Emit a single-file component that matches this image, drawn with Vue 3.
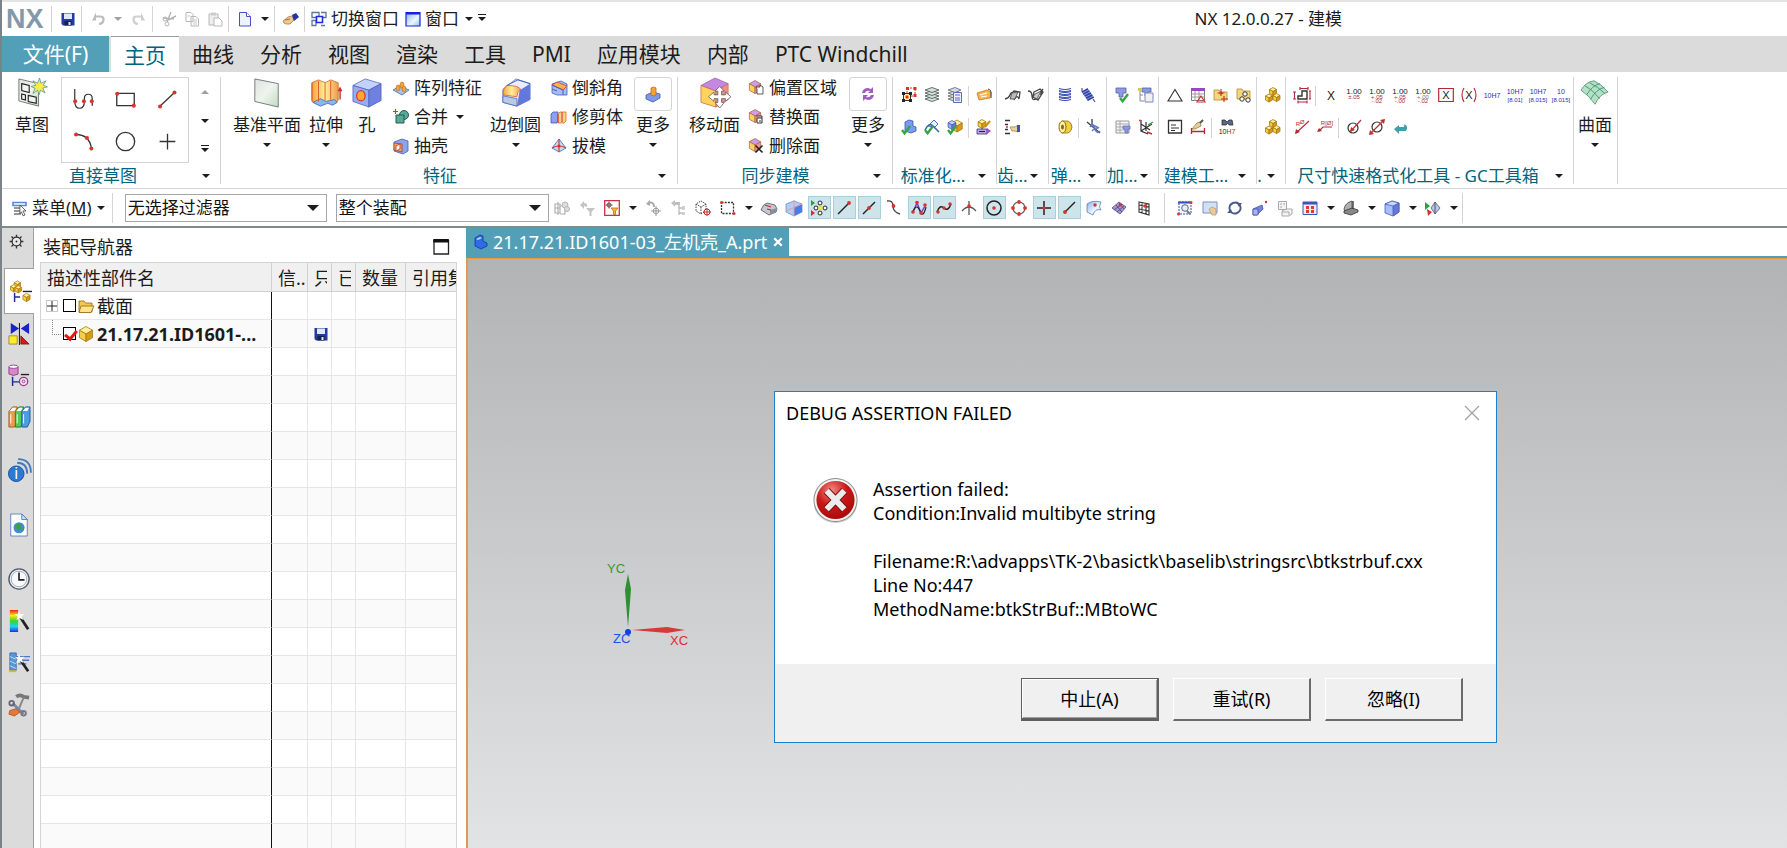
<script setup>
const dot = (x, y, r = 1.8) => `<circle cx="${x}" cy="${y}" r="${r}" fill="#d8342e"/>`
const line = (d, c = '#333', w = 1.3) => `<path d="${d}" fill="none" stroke="${c}" stroke-width="${w}"/>`
const fill = (d, c, s = 'none') => `<path d="${d}" fill="${c}" stroke="${s}" stroke-width=".8"/>`
const txt = (x, y, s, c, size = 7) => `<text x="${x}" y="${y}" font-size="${size}" fill="${c}" text-anchor="middle" font-family="Liberation Sans, sans-serif">${s}</text>`
const cube = (cx, cy, r, top, left, right, stroke) => {
  const w = r * 0.87, h = r / 2
  return `<g stroke="${stroke}" stroke-width=".8" stroke-linejoin="round">` +
    `<path fill="${top}" d="M${cx} ${cy - r}l${w} ${h}l${-w} ${h}l${-w} ${-h}z"/>` +
    `<path fill="${left}" d="M${cx - w} ${cy - h}l${w} ${h}v${r}l${-w} ${-h}z"/>` +
    `<path fill="${right}" d="M${cx + w} ${cy - h}l${-w} ${h}v${r}l${w} ${-h}z"/></g>`
}
const blue = (x, y, r) => cube(x, y, r, '#c3d2fa', '#96abf2', '#6478dc', '#4860b8')
const gold = (x, y, r) => cube(x, y, r, '#fff0a0', '#f6cf48', '#d69c18', '#a87a10')
const mix = (x, y, r) => cube(x, y, r, '#cf9cea', '#ffd35c', '#ef9588', '#b06a50')
const check = (x, y) => `<path d="M${x} ${y + 3}l2.6 3.2L${x + 8} ${y - 1}" fill="none" stroke="#35a545" stroke-width="2.4"/>`
const tol = (a, b, c = '#b22a36') => txt(8, 6.5, '1.00', '#222', 8) + txt(8, 11.5, a, c, 6) + (b ? txt(8, 16, b, '#b22a36', 6) : '')
const floppy = (a = '#233a9e') => fill('M1.500 2h13v12.500H3L1.500 13z', a) + fill('M4 2.500h8v5.500H4z', '#dfe8fb') + fill('M4.500 10h7v4.500h-7z', '#152052') + fill('M8.500 11h2v3h-2z', '#dfe8fb')
const undo = (c = '#bdbdbd') => line('M4 5.500h6q4 0 3.500 3.500T9 13', c, 2.2) + fill('M6 1.500v8H2z', c)
const cylinder = (x, y, w, h, c, s) => `<path d="M${x} ${y}v${h}q${w / 2} 3 ${w} 0v${-h}" fill="${c}" stroke="${s}"/><ellipse cx="${x + w / 2}" cy="${y}" rx="${w / 2}" ry="1.8" fill="#fff" stroke="${s}"/>`

const icons = {
  save: floppy(),
  undo: undo(),
  redo: `<g transform="matrix(-1 0 0 1 16 0)">${undo('#cfcfcf')}</g>`,
  cut: line('M10 1L6 11M2 7l11 1M15 5L7 9', '#b5b5b5', 1.4) + '<circle cx="4" cy="8" r="2" fill="none" stroke="#b5b5b5"/><circle cx="6" cy="13" r="2" fill="none" stroke="#b5b5b5"/>',
  copy: '<g fill="#fff" stroke="#b8b8b8"><path d="M2 1.500h5l2 2v7H2zM7 5.500h5l2.500 2.500v7H7z"/></g>' + line('M9 9h4M9 11h4M9 13h4M3.500 5h3', '#c8c8c8', 1),
  paste: '<path d="M2 3h9v11H2z" fill="#eee" stroke="#b8b8b8"/><path d="M4 1.500h5v3H4z" fill="#ccc"/><path d="M7 7h5l3 3v5H7z" fill="#fff" stroke="#b8b8b8"/>',
  newdoc: '<path d="M2.500 1.500h7l4 4v9.500h-11z" fill="#eef2ff" stroke="#4a4fc4"/><path d="M9.500 1.500v4h4" fill="#fff" stroke="#4a4fc4"/>',
  hand: fill('M0 10l5-4 4-1 2 4-4 4H3l-2-1z', '#efc88c', '#a67c48') + fill('M9 4l4-2 3 4-5 4z', '#2433a8') + line('M2 9l5-1', '#8b6434', 0.8),
  winswitch: '<g fill="none" stroke="#5d7795" stroke-width="1.300"><path d="M3 1.500h5v5H1v-5h2M10 1.500h5v5h-4M1 9.500h4v5H1zM10 14.500h4"/></g><path d="M5.500 5.500h6v6h-6z" fill="#fff" stroke="#1b2ddc" stroke-width="1.600"/>',
  window: '<path d="M1 1.500h14v13.500H1z" fill="url(#sky)" stroke="#1822dc" stroke-width="1.200"/><path d="M1 1h14v2.500H1z" fill="#1822dc"/>',

  sketch: fill('M2 1l21 5v24L2 24.500z', 'url(#mint)', '#555') + '<g fill="#f3f3f3" stroke="#222" stroke-width="1.200"><path d="M5 6l8 2v7.500l-8-2zM5 17l4 1v5.500l-4-1zM12 18.500l8.500 2V27L12 25z"/></g>' + fill('M24 0l1.600 5.500L31 3l-3 4.500 4.500 2-5 1.200L30 16l-5-3-1.500 5-1.500-5-5 3.500 2.300-5.500-4.300-2 5-1.200L17 3l5 2.500z', '#f7ec48', '#5290a5'),
  profile: line('M2 0v13q0 9 5.500 9t5.500-8v-3q0-5 4.500-5t4.500 5v8', '#333', 1.4) + dot(2.500, 14, 2.300) + dot(12.500, 14, 2.300) + dot(21.500, 14, 2.300),
  rect: line('M2 5h20v14H2z', '#333', 1.5) + dot(2.500, 5.500, 2.300) + dot(21.500, 19, 2.300),
  line: line('M3 20L20 4', '#333', 1.5) + dot(3.500, 20, 2.300) + dot(20, 4, 2.300),
  arc: line('M3 4q16 0 18 16', '#333', 1.5) + dot(3.500, 4, 2.300) + dot(16, 8, 2.300) + dot(21, 20, 2.300),
  circle: '<circle cx="12" cy="12" r="10.500" fill="none" stroke="#333" stroke-width="1.500"/>',
  plus: line('M12 3v18M3 12h18', '#333', 1.5),

  datum: fill('M3 1l25 5v25L3 25z', 'url(#mint)', '#555'),
  extrude: fill('M1 5l7-3 7 3 6-3 8 3v19l-5 4-6-3-9 4-8-4z', 'url(#amber)', '#b86a20') + fill('M2 26l8-4 6 3 9-2 3 3-5 3-5-2-8 3z', '#88b6ee', '#3a62b0') + line('M8 3v22M15 5v19M21 3v20M1 5v19', '#d95a2a', 1) + line('M31 23V11', '#cf2c2c', 1.5) + fill('M28.500 14L31 9l2.500 5z', '#cf2c2c'),
  hole: fill('M1 8L14 1l17 5-13 7z', '#c3d2fa', '#4860b8') + fill('M1 8l17 5v18L1 25z', '#96abf2', '#4860b8') + fill('M31 6L18 13v18l13-7z', '#7080e0', '#4860b8') + '<ellipse cx="9.500" cy="19" rx="4.500" ry="5.500" fill="#ffa830" stroke="#d8342e" stroke-width="1.300"/>',
  edge: fill('M2 12L16 1l15 5v17l-14 7-15-4z', '#e9eefc', '#4860b8') + fill('M20 13l11-7v17l-14 7z', '#6278dc') + fill('M2 18q0-7 4-10 13 0 15 4-4 3-4 8z', 'url(#amber)', '#d9503a') + fill('M2 19l15 3v8L2 26z', '#b9cbe4', '#4860b8') + line('M6 8l12-6M18 2l13 4', '#4860b8', 1),
  moveface: fill('M1 8L16 0l14 6-13 8z', '#c488e0', '#9060a8') + fill('M1 8l16 6v17L1 26z', '#ffd35c', '#c86a50') + fill('M30 6l-13 8v17l13-8z', '#ee9088', '#c86a50') + fill('M21 9l5 5h-3v4h4v-3l6 5-6 5v-3h-4v4h3l-5 6-5-6h3v-4h-4v3l-6-5 6-5v3h4v-4h-3z', '#fff', '#555'),
  surface: fill('M1 13Q6 4 15 3q7 3 15 12-9 2-14 13Q9 18 1 13z', '#b7dfc8', '#3d8c62') + line('M5 8q9 5 16 14M10 5q9 4 17 12M7 18Q13 8 21 6M11 23Q17 12 26 10', '#3d9c6c', 1),

  pattern: fill('M0 10l7-4 9 4-7 5z', '#a8c2ec', '#4468b0') + '<g fill="#f3a43c" stroke="#b8691a" stroke-width=".6"><ellipse cx="5" cy="8" rx="2" ry="3"/><ellipse cx="9" cy="5" rx="2" ry="3"/><ellipse cx="11" cy="9" rx="2" ry="3"/></g>',
  unite: '<circle cx="11" cy="6" r="4.500" fill="#56a996" stroke="#245c50"/><path d="M3 6h8v8H3z" fill="#56a996" stroke="#245c50"/>' + line('M2.500 0v5M0 2.500h5', '#d8342e', 1.2),
  shell: fill('M1 4l8-3 6 2v10l-5 3-9-3z', '#8aa4ee', '#4860b8') + fill('M1 5l8 1v8l-8-2z', '#f3a060', '#a84424') + fill('M3 8l4-2v5l-4 2z', '#fff4df', '#a84424'),
  chamfer: fill('M1 4l9-3 6 3v11H6L1 13z', '#a5bcf5', '#4860b8') + fill('M1 5l5-3 10 4-4 4z', '#f9b050', '#c9402c') + line('M1 5l11 5v5M1 9l5 2', '#4860b8', 1),
  trim: fill('M0 5l2-2h5v9l-1 2H0z', '#8aa0f0', '#3d58b8') + fill('M7 5l2-2h6v9l-2 2H7z', '#fad188', '#d9702a') + line('M7 5v9M11 3v10', '#cf2c2c', 1),
  draft: fill('M8 1l7 9-7 4-7-4z', '#c4d7f8', '#4a68a8') + line('M8 1v13M1 10q7-4 14 0', '#cf4030', 1.2) + dot(8, 8, 1.5),
  more: fill('M1 9l7-3 7 2v4l-7 4-7-3z', '#7f99e8', '#3d58a8') + fill('M6 2q2.500-2 5 0v7q-2 2-5 0z', '#f4a534', '#b86a1a'),
  refresh: fill('M2 7q1-5 6-5l3 1 2-2v6H8l2-2q-4-1-5 2z', '#a45cc2') + fill('M14 9q-1 5-6 5l-3-1-2 2V9h5l-2 2q4 1 5-2z', '#a45cc2'),
  offset: mix(7, 7, 6.500) + fill('M8 7h4v-2l3 2v7H9V9z', '#fff', '#333'),
  replace: mix(7, 7, 6.500) + '<path d="M8 7h6v2M9 9h5v5H9zM11 12h2" fill="#fff" stroke="#333"/>',
  remove: mix(7, 7, 6.500) + line('M7.500 7.500l7 7M14.500 7.500l-7 7', '#222', 1.6),

  g1: '<path d="M6 1h8v8H6z" fill="#fff" stroke="#d8342e" stroke-dasharray="2 1"/><path d="M2.500 6.500h7v7h-7z" fill="#fff8a0" stroke="#333"/>' + [[1, 5], [8, 5], [1, 12], [8, 12]].map(p => fill(`M${p[0]} ${p[1]}h3v3h-3z`, '#223')).join('') + fill('M4.500 8.500h3v3h-3z', '#e03020') + fill('M12.500 0h3v3h-3zM12.500 7h3v3h-3zM5 0h3v3H5z', '#d8342e'),
  g2: [11, 8, 5, 2].map(y => fill(`M1 ${y + 1}l7-2.500 7 2.500-7 2.500z`, '#d5e0dd', '#44524f')).join(''),
  g3: [11, 8, 5, 2].map(y => fill(`M1 ${y + 1}l7-2.500 6 2.500-6 2.500z`, '#d5dedd', '#5a6866')).join('') + '<path d="M6.500 5.500h8v10h-8z" fill="#eef" stroke="#5a68c8"/>' + line('M8 8h5M8 11h5M8 13h5', '#5a68c8', 1),
  g4: fill('M1 6l10-3 4 2-1 6-11 2z', '#f6b455', '#bf7a24') + line('M4 8l7-2M5 10l6-1', '#fff', 1.2) + line('M12 2q4 0 3 9', '#444', 1),
  g5: fill('M4 3l4-2 4 1v5l3 1v4l-5 2-6-2z', '#7c9cec', '#3656b0') + check(1, 8),
  g6: fill('M4 7l6-6 4 4-3 3z', '#e8efff', '#2a40d0') + line('M1 11Q5 3 9 7l6 6', '#3a6aa0', 1.6) + check(1, 8),
  g7: gold(10, 7, 6) + blue(5, 6, 4.500) + check(1, 8),
  g8: gold(6, 5, 4.500) + fill('M1 10h10v5H1z', '#b8a8e8', '#3c2a88') + fill('M11 9l4 3-4 3z', '#c040c0') + line('M9 8l5-6', '#c89018', 2) + line('M3 12.500h6', '#222', 1),
  gear1: line('M0 12q4-1 5-4t2-2M7 6l2-2 6 1-1 7q-1-3-3-2l-2 3', '#444', 1.3) + fill('M7 6l6-1-3 7H5z', '#bbb', '#444'),
  gear2: line('M0 4q4 0 4 5t4 3M15 2q-3 4-2 7M6 5l6-3 3 3-5 8-5-3z', '#444', 1.3) + fill('M7 7l6-3-4 8-4-2z', '#ccc', '#444'),
  gear3: line('M0 1.500h5M0 5.500h3M0 10.500h3M0 14.500h5', '#333', 1.4) + fill('M5 8h5l3-2v7l-3-1H7z', '#f2d1a0', '#a6804c') + fill('M12 6h3v7h-3z', '#4050c0') + dot(2, 8, 1),
  spring1: [2.500, 5.500, 8.500, 11.500].map(y => line(`M2 ${y - 1}q6 2 12 0M2 ${y + 1}q6 2 12 0`, '#3b4bb8', 1.2)).join(''),
  spring2: `<g transform="rotate(-35 8 8)">${fill('M4.500 2h7v11h-7z', '#8c98dc')}${[2, 4.500, 7, 9.500, 12].map(y => line(`M4.500 ${y}l7 1`, '#3040a0', 1.5)).join('')}</g>` + line('M2 1v3M13 12l2 3', '#556', 1.2),
  spring3: fill('M5 2h6q4 2 4 6t-4 6H5z', '#f2d03c', '#8a6a10') + '<ellipse cx="5.500" cy="8" rx="3.500" ry="6" fill="#fff0a0" stroke="#8a6a10"/><ellipse cx="5.500" cy="8" rx="1.500" ry="2.500" fill="#8a6a10"/>',
  spring4: line('M1 3l13 11M6 0v8', '#444', 1.4) + line('M4 8q2-3 4 0t4 0M6 12q2-3 4 0t4 0M5 5l8 4', '#6a7ac8', 1.4),
  proc1: fill('M1 1h10v5H8v4H4V6H1z', '#8c9ae0', '#5460b0') + check(5, 8),
  proc2: fill('M4 1h9v4h-3v4H7V5H4z', '#8c9ae0', '#5460b0') + '<path d="M7 6h8v9H7z" fill="#f2f2e8" stroke="#7a86c8"/>' + line('M2 3v11h4M2 8h3', '#8a8a8a', 1) + fill('M0 1h3v3H0z', '#d8c468'),
  proc3: '<path d="M1 2h13v12H1z" fill="#f4f4f4" stroke="#999"/>' + line('M1 5h13M1 8h13M1 11h13M5 2v12', '#aaa', 1) + fill('M8 7h7v3h-2v4h-3v-4H8z', '#8c9ae0', '#6070c8'),
  proc4: line('M3 1v11l7 3M3 12l11-7M3 5l9 6M8 3v9', '#333', 1.2) + line('M10 6l5-3', '#35a545', 1.4) + line('M9 13l5 2', '#c03030', 1.4) + dot(2, 1.5, 1),
  triangle: line('M8 2.500L15 14H1z', '#333', 1.1),
  tablegrid: '<path d="M1.500 1.500h13v12h-13z" fill="#fff" stroke="#777"/><path d="M1 1h14v3H1z" fill="#9548c0"/>' + line('M1 7h14M1 10h14M5 4v10M9 4v10', '#999', 1) + line('M11 9l4 6H7z', '#d8342e', 1.2),
  folderstar: fill('M1 3h5l1 2h7v8H1z', '#f3d77c', '#b08c30') + line('M8 2v7M4.500 6h7M11 9v6M8 12h7', '#c03020', 1.1) + dot(8, 6, 1.6),
  foldercirc: fill('M1 2h5l1 2h7v8H1z', '#f3d77c', '#b08c30') + '<g fill="#fff" stroke="#333"><circle cx="9" cy="7" r="2.200"/><circle cx="6" cy="12" r="2.200"/><circle cx="12" cy="13" r="2.200"/></g>',
  notebox: '<path d="M1.500 1.500h13v12.500h-13z" fill="#fff" stroke="#333" stroke-width="1.300"/>' + line('M4 6h5M4 9h8M4 11.500h4', '#333', 1.2),
  brush: fill('M7 4l3-1 1 4-6 3-3 0z', '#e9cf9c', '#96793c') + line('M10 4l3-3', '#555', 2) + line('M1.500 9v6M14.500 9v6M2 12.500h12', '#b22a36', 1.3),
  binoc: fill('M3 1h3l2 2 2-2h3l1 5h-4l-1-2-2 2H3z', '#556a88', '#333') + txt(8, 15, '10<tspan fill="#b22a36">H7</tspan>', '#222', 7),
  boxes: gold(8, 4.500, 4) + gold(4, 11, 4) + gold(11.500, 10.500, 4),
  dimshape: line('M8 4h5v8H4V9h4z', '#333', 1.4) + line('M6 0v3M14 0v3M6 1.500h8M-1 5h3M-1 12h3M.500 5v7M15 4h2M15 12h2M16 4v8M4 15h9M4 13.500v3M13 13.500v3', '#b22a36', 1.1),
  xmark: txt(8, 12.500, 'X', '#222', 12),
  t1: tol('±.05'), t2: tol('+.05', '-.02'), t3: tol('+.05', '-.00'), t4: tol('+.00', '-.02', '#777'),
  boxx: '<path d="M.700 1.500h14.600v13H.700z" fill="#fff" stroke="#b22a36" stroke-width="1.200"/>' + txt(8, 12, 'X', '#222', 11),
  parx: line('M3 1Q-1 8 3 15M13 1q4 7 0 14', '#b22a36', 1.1) + txt(8, 12, 'X', '#222', 11),
  h1: txt(8, 11, '10H7', '#2b2bb4', 7),
  h2: txt(8, 7, '10H7', '#2b2bb4', 7) + txt(8, 14.500, '[8.01]', '#2b2bb4', 6),
  h3: txt(8, 7, '10H7', '#2b2bb4', 7) + txt(8, 14.500, '[8.015]', '#2b2bb4', 6),
  h4: txt(8, 7, '10', '#2b2bb4', 7) + txt(8, 14.500, '[8.015]', '#2b2bb4', 6),
  rad1: line('M2 14L15 2', '#b22a36', 1.1) + fill('M1 15l1-5 4 3z', '#b22a36') + txt(4, 7, 'R', '#b22a36', 6) + txt(8, 5, 'Ø', '#b22a36', 6),
  rad2: line('M2 12l4-4h9', '#b22a36', 1.1) + fill('M0 13l2-4 3 3z', '#b22a36') + txt(10, 6, 'R[Ø]', '#b22a36', 6),
  dia1: '<circle cx="7" cy="9" r="5" fill="none" stroke="#333" stroke-width="1.200"/>' + line('M4 13L15 1', '#c03030', 1.2) + fill('M4 13l1-5 4 3z', '#c03030'),
  dia2: '<circle cx="8" cy="8" r="5" fill="none" stroke="#333" stroke-width="1.200"/>' + line('M1 15L15 1', '#c03030', 1.2) + fill('M0 16l1-5 4 4zM16 0l-1 5-4-4z', '#c03030'),
  back: fill('M2 10l5-4v2h4q2 0 1-3 5 2 2 7H7v3z', '#3f9faa'),

  menu: line('M1 2.500h13v3H1z', '#5a86d8', 1.6) + line('M2 8h6M2 11h6M2 14h7', '#777', 1.3) + fill('M8 5l6 6h-3l2 4-2 .800-1.600-4-1.600 2z', '#fff', '#444'),
  f1: line('M1 4h5v9H1zM1 8h5M4 2v13M6 6h5v8H6', '#b0b0b0', 1.2) + '<circle cx="11" cy="5" r="3" fill="#ddd" stroke="#b5b5b5"/><circle cx="13" cy="9" r="2.500" fill="#ddd" stroke="#b5b5b5"/>',
  f2: fill('M1 5l4-4v2q4 0 3 4L5 6v3z', '#c4c4c4') + fill('M7 8h9l-3.500 4v4h-2v-4z', '#c4c4c4'),
  f3: '<path d="M.700.700h14.600v14.600H.700z" fill="#fff" stroke="#cf3040" stroke-width="1.300"/><circle cx="5" cy="5" r="2" fill="none" stroke="#a33"/>' + line('M5 1.500v7M1.500 5h7', '#555', 1) + fill('M7 8h7l-2.500 3v3.500h-2V11z', '#f2b43c', '#b07818'),
  f4: line('M3 3q6-2 6 4', '#aaa', 2) + fill('M1 4l4-4v6z', '#aaa') + '<circle cx="11" cy="11" r="2.800" fill="none" stroke="#999"/>' + line('M11 6v10M6 11h10', '#999', 1),
  f5: fill('M1 3l4-3v2h5v3H5v2z', '#c0c0c0') + line('M9 5v10M9 8h5M9 13h5', '#bbb', 1.3) + fill('M12 6h3v4h-3zM12 12h3v3h-3z', '#d0d0d0'),
  f6: '<path d="M6 1l5 3v7l-5 3-5-3V4zM1 4l5 3 5-3M6 7v7" fill="none" stroke="#444" stroke-dasharray="1.500 1"/><circle cx="12" cy="12" r="3" fill="#fff" stroke="#c03030"/>' + line('M12 8v8M8 12h8', '#c03030', 1),
  f7: '<path d="M1.500 2.500h12v11h-12z" fill="none" stroke="#333" stroke-dasharray="2 1.200" stroke-width="1.300"/>' + dot(1.500, 2.500, 1.500) + dot(14, 13.500, 1.500),
  f8: fill('M0 10q2-6 6-7l8 2 2 4-1 3-7 3z', '#c4c8d4', '#555') + fill('M9 10l7-2-1 4-6 3z', '#888fa0') + line('M4 5l6 2M6 9l4 1', '#c03030', 1.2),
  f9: fill('M0 4l8-3 8 3v8l-8 4-8-4z', '#b4ccf4', '#6890d8') + fill('M8 7l8-3v8l-8 4z', '#4a7ce8') + line('M8 0v16M0 11L16 4', '#e89aa0', 1),
  s1: '<g fill="#fff" stroke="#222"><circle cx="9" cy="3" r="2"/><circle cx="9" cy="13" r="2"/><circle cx="5" cy="8" r="2"/><circle cx="14" cy="8" r="2"/></g><circle cx="9.500" cy="8" r="2.200" fill="#f2e23c"/>' + fill('M0 0l4 3-4 3z', '#2f9f2f') + fill('M0 10l4 3-4 3z', '#d83030'),
  s2: line('M2 14L13 3', '#222', 1.5) + dot(13, 3, 1.900),
  s3: line('M2 14L14 2', '#222', 1.5) + dot(8, 8, 1.900),
  s4: line('M1 1q6-1 6 5t7 8', '#444', 1.4) + dot(7.500, 6, 1.900),
  s5: line('M2 12L6 3l4 10 4-7', '#7a3cc8', 1.5) + line('M2 11q4-8 7 0t6-4', '#222', 1.2) + dot(2, 12, 1.800) + dot(6, 2.500, 1.800) + dot(10, 13, 1.800) + dot(14, 5, 1.800),
  s6: line('M1 12q3-8 7-4t7-4', '#222', 1.5) + dot(2, 12, 1.700) + dot(8, 8, 1.700) + dot(14, 4, 1.700),
  s7: line('M1 11q7-8 14 0M8 1v14', '#555', 1.3) + dot(8, 6, 1.800),
  s8: '<circle cx="8" cy="8" r="7" fill="none" stroke="#222" stroke-width="1.500"/>' + dot(8, 8, 1.800),
  s9: '<circle cx="8" cy="8" r="6" fill="none" stroke="#666" stroke-width="1.200"/>' + dot(8, 2, 1.900) + dot(2, 8, 1.900) + dot(14, 8, 1.900) + dot(8, 14, 1.900),
  s10: line('M8 1v14M1 8h14', '#222', 1.5) + dot(8, 8, 1.700),
  s11: line('M3 13L14 2', '#222', 1.4) + dot(4, 12, 1.900),
  s12: fill('M1 4Q6 0 15 2q-3 5 0 8-6-2-8 5L1 12z', 'url(#sky)', '#5c82b8') + dot(9, 5, 1.700),
  s13: fill('M1 8l7-6 7 5-6 7z', '#a898d0', '#554488') + line('M3 10l8-6M6 12l7-6M5 5l6 7M8 3l5 6', '#554488', 0.9) + dot(9, 5, 1.500),
  s14: line('M3 2l10 2v11L3 12zM3 5l10 2M3 9l10 2M6 2v11M10 3v11', '#333', 1.1) + dot(9, 6, 1.700),
  v1: '<path d="M2 2h12v12H2z" fill="#f2f6ff" stroke="#3050c0" stroke-dasharray="2 1"/>' + line('M1 2.500h12', '#3050c0', 2) + '<circle cx="8" cy="8" r="3.300" fill="#e4eef4" stroke="#667"/>' + line('M10 11l3 3', '#776', 2) + dot(1.500, 14, 1.500) + dot(14, 2.500, 1.500),
  v2: '<path d="M1 2h14v11H1z" fill="#d2e0f6" stroke="#7a90c0"/>' + fill('M7 9l3-2 4 2v6h-4z', '#edc898', '#c09a64'),
  v3: line('M3 11Q1 5 6 3t7 3M13 5q2 6-3 8t-7-3', '#4a5a88', 1.9) + fill('M12 7l3-4-5 0zM4 9l-4 4h5z', '#4a5a88'),
  v4: fill('M1 9l9-4 1 4-6 6H1z', '#7884e0', '#4450a8') + fill('M1 9h5v6H1z', '#aab4f4', '#4450a8') + dot(14, 2, 1.200),
  v5: '<g fill="#f3f3f3" stroke="#aaa"><path d="M1.500 1.500h8v8h-8zM5 11l4-2h6v5l-3 2H5z"/></g>' + line('M3 4h2M6 4h2M3 7h2M5 12h7v3', '#aaa', 1),
  v6: '<path d="M1 2h14v12.500H1z" fill="#e8eefc" stroke="#3c54b8"/><path d="M1 2h14v2.500H1z" fill="#3c54b8"/>' + fill('M4 6h3v3H4zM9 6h3v3H9zM4 10h3v3H4zM9 10h3v3H9z', '#e03a28'),
  v7: fill('M1 9q1-6 8-8v8l-4 3q-4 0-4-3z', '#b0b0b0', '#444') + fill('M1 11l8-3 6 2v2l-7 3-7-2z', '#888', '#333') + line('M10 1v8', '#333', 1.3),
  v8: fill('M1 4l7-3 7 2v9l-6 4-8-3z', '#a8bcf6', '#4860b8') + fill('M9 6l6-3v9l-6 4z', '#6478dc', '#4860b8') + fill('M1 4l7-3 7 2-6 3z', '#ccd8fa', '#4860b8'),
  v9: fill('M0 2l5 4-5 4z', '#2fa040') + fill('M2 9l5 3-4 4z', '#d83030') + fill('M10 2l5 6-5 6-4-6z', '#b8c8e8', '#556') + line('M10 2v12', '#556', 1),

  gear: '<circle cx="12" cy="12" r="7" fill="#e9e9e9" stroke="#333" stroke-width="2"/><circle cx="12" cy="12" r="1.600" fill="#333"/>' + line('M12 1v4M12 19v4M1 12h4M19 12h4M4 4l3 3M17 17l3 3M4 20l3-3M17 7l3-3', '#333', 2.2),
  asm: gold(8, 5, 4) + gold(4, 9, 4) + gold(9, 10, 4) + line('M14 12.500h10', '#222', 1.5) + line('M5 14v10M5 18.500h6', '#202a90', 1.6) + gold(18, 19, 4.500),
  constraint: fill('M3 0l9 6-9 6zM23 0l-9 6 9 6z', '#1b22c8') + line('M12.500 0v24', '#222', 1.2) + fill('M1 14h9v9H1z', '#f8ee30', '#96701c') + fill('M14 14l9 9h-9z', '#d81818', '#701010'),
  part: cylinder(1, 3, 10, 8, '#d888c8', '#903c88') + line('M14 11.500h9', '#222', 1.5) + line('M5 14v10M5 19.500h7', '#202a90', 1.6) + '<circle cx="17" cy="19" r="4.500" fill="#f2e3f2" stroke="#903c88" stroke-width="1.400"/><circle cx="17" cy="19" r="1.500" fill="none" stroke="#903c88"/>',
  books: [['#ee9c48', '#a85a18', 1], ['#54c858', '#1e7a28', 8], ['#4c9ce0', '#1d5a9c', 15]].map(b => `<path d="M${b[2]} 6l4-5h5v16l-3 6h-6z" fill="${b[0]}" stroke="${b[1]}"/><path d="M${b[2] + 4} 2h4l-2 3.500h-5z" fill="#fff"/><path d="M${b[2] + 2} 9v10" stroke="#fff"/>`).join(''),
  info: '<circle cx="9" cy="15" r="8.500" fill="#2a7ad4" stroke="#184e98"/>' + txt(9, 20.500, 'i', '#fff', 17) + line('M10 3q11 0 11 12M11-1q14 0 14 15', '#4a78b8', 2),
  webpage: fill('M3 0h12l6 6v18H3z', '#fff', '#2c68b8') + fill('M15 0v6h6z', '#cfe2f8', '#2c68b8') + '<circle cx="12" cy="15" r="6" fill="#3e8ed4"/>' + fill('M8 12q5-4 6 0t-2 6q-3-1-4-6zM15 16l3-2-1 4z', '#3da048'),
  clock: '<circle cx="12" cy="12" r="11" fill="#e8f0f8" stroke="#555b66" stroke-width="1.500"/><circle cx="12" cy="12" r="8.500" fill="#f6fafc" stroke="#a5aab2"/>' + line('M12 5v8h6', '#222', 1.8),
  rainbow: '<path d="M2 0h9v24H2z" fill="url(#rainbow)"/>' + line('M13 7l9 14', '#222', 3) + fill('M12 1l1.500 4L18 4l-3 3 2 4-4-2-4 2 1.500-4L7 4l4 1z', '#fff'),
  chart: fill('M2 1h7v19H2z', '#5898d8', '#2860a0') + line('M2 5l7 3M2 10l7 3M2 15l7 3', '#bfdcf4', 1) + line('M7 5h17M9 9h14M11 13h9', '#4a7ac0', 1.4) + line('M13 8l9 13', '#222', 3) + fill('M12 2l1.500 4L18 5l-3 3 2 4-4-2-4 2 1.500-4L7 5l4 1z', '#fff') + line('M1 21h8', '#e8b828', 2),
  tools: line('M9 3q4-3 8 0l6 1', '#777', 4) + line('M17 4l-5 12', '#8a8a8a', 2.2) + line('M5 10l12 12', '#7888a8', 3) + '<circle cx="4" cy="10" r="2.500" fill="none" stroke="#667" stroke-width="2"/><circle cx="17" cy="21" r="2.500" fill="none" stroke="#778" stroke-width="2"/>' + fill('M2 18l7-2 4 4-6 4-6-2z', '#e87830', '#a04818'),

  ncube: gold(8, 8, 7.500),
  folder: fill('M1 3h5l1.500 2H14v9H1z', '#f6c84a', '#8a6414') + fill('M3 8h13l-3 6.500H1z', '#ffe48c', '#8a6414'),
  bluepart: fill('M2 4l5-3 3 1v5l4 2v3l-6 3-6-3z', '#2f6ae8', '#123a98') + fill('M3 5l4-2 2 1-4 2z', '#bcd4ff'),
  max: line('M1 1v14h14.500V1', '#222', 1.3) + fill('M.300 0h15.500v3.500H.300z', '#111'),
  close: line('M1 1l14 14M15 1L1 15', '#a0a0a0', 1.2),
  tabclose: line('M3 3l10 10M13 3L3 13', '#fff', 3)
}

const tabs = ['曲线', '分析', '视图', '渲染', '工具', 'PMI', '应用模块', '内部', 'PTC Windchill']
const quick = [
  ['sep'], ['save', '保存'], ['sep'], ['undo', '撤消'], ['caret', '', 'muted'], ['redo', '重做'], ['sep'],
  ['cut', '剪切'], ['copy', '复制'], ['paste', '粘贴'], ['sep'], ['newdoc', '新建'], ['caret'], ['sep'], ['hand', '触控'], ['sep']
]
const gallery = [['profile', '轮廓'], ['rect', '矩形'], ['line', '直线'], ['arc', '圆弧'], ['circle', '圆'], ['plus', '点']]
const groups = [
  { label: '特征', cls: 'feature', body: [
    { big: 'datum', text: '基准平面', caret: true }, { big: 'extrude', text: '拉伸', caret: true }, { big: 'hole', text: '孔' },
    { list: [['pattern', '阵列特征'], ['unite', '合并', true], ['shell', '抽壳']] },
    { big: 'edge', text: '边倒圆', caret: true },
    { list: [['chamfer', '倒斜角'], ['trim', '修剪体'], ['draft', '拔模']] },
    { more: 'more' }] },
  { label: '同步建模', cls: 'sync', body: [
    { big: 'moveface', text: '移动面' },
    { list: [['offset', '偏置区域'], ['replace', '替换面'], ['remove', '删除面']] },
    { more: 'refresh' }] },
  { label: '标准化...', cls: 'small', rows: [['g1', 'g2', 'g3', '|', 'g4'], ['g5', 'g6', 'g7', '|', 'g8']] },
  { label: '齿...', cls: 'small', rows: [['gear1', 'gear2'], ['gear3']] },
  { label: '弹...', cls: 'small', rows: [['spring1', 'spring2'], ['spring3', '|', 'spring4']] },
  { label: '加...', cls: 'small', rows: [['proc1', 'proc2'], ['proc3', 'proc4']] },
  { label: '建模工...', cls: 'small', rows: [['triangle', 'tablegrid', 'folderstar', 'foldercirc'], ['notebox', 'brush', '|', 'binoc']] },
  { label: '.', cls: 'small', rows: [['boxes'], ['boxes']] },
  { label: '尺寸快速格式化工具 - GC工具箱', cls: 'small', rows: [['dimshape', '|', 'xmark', 't1', 't2', 't3', 't4', 'boxx', 'parx', 'h1', 'h2', 'h3', 'h4'], ['rad1', 'rad2', '|', 'dia1', 'dia2', 'back']] },
  { cls: 'last', body: [{ big: 'surface', text: '曲面', caret: true }] }
]
const selection = ['f1', 'f2', 'f3', 'v', 'f4', 'f5', 'f6', 'f7', 'v', 'f8', 'f9', 's1*', 's2*', 's3*', 's4', 's5*', 's6*', 's7', 's8*', 's9', 's10*', 's11*', 's12', 's13', 's14', '|',
  'v1', 'v2', 'v3', 'v4', 'v5', 'v6', 'v', 'v7', 'v', 'v8', 'v', 'v9', 'v', '|']
const rail = [['asm', '装配导航器'], ['constraint', '约束导航器'], ['part', '部件导航器'], ['books', '重用库'], ['info', 'HD3D 工具'], ['webpage', 'Web 浏览器'], ['clock', '历史记录'], ['rainbow', '系统材料'], ['chart', '加工向导'], ['tools', '角色']]
const spaced = ['info', 'webpage', 'clock']
</script>

<template>
  <div class="app">
    <svg class="defs" aria-hidden="true">
      <defs>
        <linearGradient id="sky" x1="0" y1="0" x2="1" y2="1"><stop offset="0" stop-color="#7fb4f0" /><stop offset=".6" stop-color="#eef6ff" /><stop offset="1" stop-color="#8cc0ee" /></linearGradient>
        <linearGradient id="mint" x1="0" y1="0" x2="1" y2="1"><stop offset="0" stop-color="#dfe3df" /><stop offset=".5" stop-color="#eef4ee" /><stop offset="1" stop-color="#bfdcc4" /></linearGradient>
        <linearGradient id="amber" x1="0" y1="0" x2="1" y2="0"><stop offset="0" stop-color="#f8a23c" /><stop offset=".5" stop-color="#fff09a" /><stop offset="1" stop-color="#f29a4c" /></linearGradient>
        <linearGradient id="rainbow" x1="0" y1="0" x2="0" y2="1"><stop offset="0" stop-color="#f02010" /><stop offset=".25" stop-color="#ffe810" /><stop offset=".5" stop-color="#30d830" /><stop offset=".75" stop-color="#20d0f0" /><stop offset="1" stop-color="#2030e0" /></linearGradient>
        <radialGradient id="error" cx=".4" cy=".25" r=".8"><stop offset="0" stop-color="#ee8a84" /><stop offset=".5" stop-color="#c81818" /><stop offset="1" stop-color="#a80808" /></radialGradient>
      </defs>
    </svg>

    <header class="titlebar">
      <span class="logo">NX</span>
      <template v-for="(q, i) in quick" :key="i">
        <i v-if="q[0] === 'sep'" class="tsep"></i>
        <button v-else-if="q[0] === 'caret'" class="qcaret" aria-label="更多选项"><i class="caret" :class="q[2]"></i></button>
        <button v-else class="qbtn" :aria-label="q[1]"><svg class="i16" viewBox="0 0 16 16" v-html="icons[q[0]]"></svg></button>
      </template>
      <button class="qtext"><svg class="i16" viewBox="0 0 16 16" v-html="icons.winswitch"></svg>切换窗口</button>
      <button class="qtext"><svg class="i16" viewBox="0 0 16 16" v-html="icons.window"></svg>窗口<i class="caret"></i></button>
      <button class="qcaret" aria-label="自定义"><i class="caret bar"></i></button>
      <h1 class="wintitle">NX 12.0.0.27 - 建模</h1>
    </header>

    <nav class="tabs">
      <button class="tab file">文件(F)</button>
      <button class="tab active">主页</button>
      <button v-for="t in tabs" :key="t" class="tab">{{ t }}</button>
    </nav>

    <section class="ribbon">
      <div class="group sketch">
        <div class="body">
          <button class="big"><svg class="i30" viewBox="0 0 32 32" v-html="icons.sketch"></svg><span>草图</span></button>
          <div class="gallery">
            <button v-for="g in gallery" :key="g[0]" :aria-label="g[1]"><svg class="i21" viewBox="0 0 24 24" v-html="icons[g[0]]"></svg></button>
          </div>
          <div class="scroller">
            <button aria-label="上一行"><i class="caret up muted"></i></button>
            <button aria-label="下一行"><i class="caret"></i></button>
            <button aria-label="展开"><i class="caret bar"></i></button>
          </div>
        </div>
        <div class="glabel"><span>直接草图</span><button aria-label="直接草图选项"><i class="caret"></i></button></div>
      </div>

      <div v-for="(g, gi) in groups" :key="gi" class="group" :class="g.cls">
        <div v-if="g.body" class="body">
          <template v-for="(b, bi) in g.body" :key="bi">
            <button v-if="b.big" class="big"><svg class="i30" viewBox="0 0 32 32" v-html="icons[b.big]"></svg><span>{{ b.text }}</span><i v-if="b.caret" class="caret"></i></button>
            <div v-else-if="b.list" class="list">
              <button v-for="l in b.list" :key="l[1]"><svg class="i16" viewBox="0 0 16 16" v-html="icons[l[0]]"></svg>{{ l[1] }}<i v-if="l[2]" class="caret"></i></button>
            </div>
            <button v-else class="morebtn"><span class="morebox"><svg class="i16" viewBox="0 0 16 16" v-html="icons[b.more]"></svg></span><span>更多</span><i class="caret"></i></button>
          </template>
        </div>
        <div v-else class="body rows">
          <div v-for="(r, ri) in g.rows" :key="ri" class="row">
            <template v-for="(n, ni) in r" :key="ni">
              <i v-if="n === '|'" class="msep"></i>
              <button v-else :aria-label="g.label + ' ' + (ni + 1)"><svg class="i16" viewBox="0 0 16 16" v-html="icons[n]"></svg></button>
            </template>
          </div>
        </div>
        <div v-if="g.label" class="glabel"><span>{{ g.label }}</span><button :aria-label="g.label + '选项'"><i class="caret"></i></button></div>
      </div>
    </section>

    <section class="selbar">
      <button class="menubtn"><svg class="i16" viewBox="0 0 16 16" v-html="icons.menu"></svg><span>菜单(<u>M</u>)</span><i class="caret"></i></button>
      <i class="ssep"></i>
      <label class="combo first"><select aria-label="选择过滤器"><option>无选择过滤器</option></select><i class="caret large"></i></label>
      <label class="combo second"><select aria-label="选择范围"><option>整个装配</option></select><i class="caret large"></i></label>
      <template v-for="(s, i) in selection" :key="i">
        <i v-if="s === '|'" class="ssep wide"></i>
        <button v-else-if="s === 'v'" class="scaret" aria-label="更多选项"><i class="caret"></i></button>
        <button v-else class="sbtn" :class="{ on: s.endsWith('*') }" :aria-label="'选择工具 ' + (i + 1)"><svg class="i16" viewBox="0 0 16 16" v-html="icons[s.replace('*', '')]"></svg></button>
      </template>
    </section>

    <main class="work">
      <nav class="rail">
        <button class="gear" aria-label="资源条选项"><svg viewBox="0 0 24 24" v-html="icons.gear"></svg></button>
        <button v-for="r in rail" :key="r[0]" :class="{ active: r[0] === 'asm', second: r[0] === 'constraint', spaced: spaced.includes(r[0]) }" :aria-label="r[1]"><svg class="i22" viewBox="0 0 24 24" v-html="icons[r[0]]"></svg></button>
      </nav>

      <aside class="panel">
        <div class="phead"><h2>装配导航器</h2><button aria-label="最大化"><svg class="i16" viewBox="0 0 16 16" v-html="icons.max"></svg></button></div>
        <div class="tablebox">
          <table>
            <colgroup><col class="c1"><col class="c2"><col class="c3"><col class="c3"><col class="c4"><col></colgroup>
            <thead><tr><th>描述性部件名</th><th>信..</th><th><span>只</span></th><th><span>已</span></th><th>数量</th><th><span>引用集</span></th></tr></thead>
            <tbody>
              <tr>
                <td><div class="node"><button class="expand" aria-label="展开截面"><svg viewBox="0 0 12 12"><path d="M1 6h10M6 1v10" stroke="#222" /></svg></button><input type="checkbox" aria-label="截面"><svg class="i16" viewBox="0 0 16 16" v-html="icons.folder"></svg><span>截面</span></div></td>
                <td></td><td></td><td></td><td></td><td></td>
              </tr>
              <tr>
                <td><div class="node child"><i class="branch"></i><input type="checkbox" checked aria-label="21.17.21.ID1601-03"><svg class="i16" viewBox="0 0 16 16" v-html="icons.ncube"></svg><strong>21.17.21.ID1601-...</strong></div></td>
                <td></td><td><svg class="i16 mod" viewBox="0 0 16 16" v-html="icons.save"></svg></td><td></td><td></td><td></td>
              </tr>
              <tr v-for="n in 18" :key="n"><td></td><td></td><td></td><td></td><td></td><td></td></tr>
            </tbody>
          </table>
        </div>
      </aside>

      <section class="view">
        <div class="doctabs">
          <div class="doctab"><svg class="i16" viewBox="0 0 16 16" v-html="icons.bluepart"></svg><span>21.17.21.ID1601-03_左机壳_A.prt</span><button aria-label="关闭"><svg viewBox="0 0 16 16" v-html="icons.tabclose"></svg></button></div>
        </div>
        <div class="canvas">
          <svg class="triad" viewBox="0 0 100 100" role="img" aria-label="坐标系">
            <path d="M28 8L31 23L28 61L25 24z" fill="#2f8f33" />
            <path d="M32 64L67 61L85 64L67 67z" fill="#d83838" />
            <circle cx="28" cy="66" r="3" fill="#1040e0" />
            <g font-family="Liberation Sans, sans-serif" font-size="13">
              <text x="7" y="7" fill="#3a963c">YC</text><text x="70" y="79" fill="#d83030">XC</text><text x="13" y="77" fill="#1c50f0">ZC</text>
            </g>
          </svg>
          <div class="dialog" role="alertdialog" aria-labelledby="dlgtitle">
            <div class="dhead"><h2 id="dlgtitle">DEBUG ASSERTION FAILED</h2><button aria-label="关闭"><svg class="i16" viewBox="0 0 16 16" v-html="icons.close"></svg></button></div>
            <div class="dbody">
              <svg class="erricon" viewBox="0 0 48 48" aria-hidden="true">
                <ellipse cx="24" cy="27" rx="22" ry="20" fill="#000" opacity=".2" />
                <circle cx="24" cy="23.500" r="22.500" fill="#8c8c8c" /><circle cx="24" cy="23.500" r="21.500" fill="#f4f4f4" /><circle cx="24" cy="23.500" r="19.500" fill="url(#error)" />
                <path d="M15 14l18 19M33 14L15 33" stroke="#7c1010" stroke-width="8" /><path d="M15 14l18 19M33 14L15 33" stroke="#ececec" stroke-width="6" />
              </svg>
              <p>Assertion failed:<br>Condition:Invalid multibyte string<br><br>Filename:R:\advapps\TK-2\basictk\baselib\stringsrc\btkstrbuf.cxx<br>Line No:447<br>MethodName:btkStrBuf::MBtoWC</p>
            </div>
            <div class="dfoot"><button class="default">中止(A)</button><button>重试(R)</button><button>忽略(I)</button></div>
          </div>
        </div>
      </section>
    </main>
  </div>
</template>

<style>
html, body, #app { height: 100%; }
body { margin: 0; overflow: hidden; }
</style>

<style scoped>
.app { height: 100%; min-height: 0; display: flex; flex-direction: column; box-sizing: border-box; border-left: 2px solid #7c8388; background: #fff; color: #1c1c1c; font: 17px/24px "Noto Sans", "Noto Sans CJK SC", sans-serif; overflow: hidden; white-space: nowrap; }
.app * { box-sizing: border-box; }
button { font: inherit; color: inherit; background: none; border: 0; padding: 0; margin: 0; display: flex; align-items: center; justify-content: center; flex: none; }
h1, h2, p { margin: 0; font: inherit; }
svg { display: block; flex: none; overflow: visible; }
.defs { position: absolute; width: 0; height: 0; }
.i16 { width: 16px; height: 16px; }
.i21 { width: 21px; height: 21px; }
.i22 { width: 22px; height: 22px; }
.i30 { width: 30px; height: 30px; }
.caret { display: block; flex: none; width: 0; height: 0; border: 4px solid transparent; border-top-color: #1c1c1c; border-bottom: 0; }
.caret.up { transform: rotate(180deg); }
.caret.muted { border-top-color: #a0a0a0; }
.caret.large { border-width: 6px 6px 0; }
.caret.bar { position: relative; }
.caret.bar::before { content: ""; position: absolute; left: -4px; top: -7px; width: 8px; height: 1px; background: #1c1c1c; }

.titlebar { flex: none; height: 36px; display: flex; align-items: center; border-top: 2px solid #e3e3e3; padding-left: 4px; }
.logo { width: 45px; font: bold 27px/30px "Liberation Sans", sans-serif; color: #8399aa; }
.tsep { width: 1px; height: 26px; background: #d4d4d4; }
.qbtn { width: 23px; }
.tsep + .qbtn { margin-left: 4px; }
.qbtn:has(+ .tsep) { margin-right: 2px; }
.qcaret { width: 18px; height: 24px; }
.qtext { gap: 4px; margin-left: 6px; }
.qtext .caret { margin-left: 2px; }
.wintitle { margin-left: 39.5%; }

.tabs { flex: none; height: 36px; display: flex; background: #dbdbdb; font-size: 21px; }
.tab { padding: 0 13px; height: 36px; }
.tab.file { width: 107px; margin-right: 2px; background: #539fb8; color: #fff; }
.tab.active { background: #fff; color: #00647f; border-top: 1px solid #9c9c9c; }

.ribbon { flex: none; height: 117px; display: flex; border-bottom: 1px solid #d4d4d4; }
.group { flex: none; display: flex; flex-direction: column; position: relative; padding-right: 2px; }
.group::after { content: ""; position: absolute; right: 0; top: 5px; bottom: 4px; width: 1px; background: #d4d4d4; }
.body { display: flex; align-items: flex-start; height: 92px; margin-top: 1px; }
.big, .morebtn { flex-direction: column; justify-content: flex-start; min-width: 40px; padding: 5px 4px 0; }
.big span { margin-top: 5px; }
.big .caret, .morebtn .caret { margin-top: 6px; }
.sketch { padding-left: 9px; padding-right: 4px; }
.gallery { display: grid; grid-template-columns: repeat(3, 42px); grid-template-rows: repeat(2, 42px); border: 1px solid #d4d4d4; margin: 4px 4px 0 8px; }
.gallery button { width: 42px; height: 42px; }
.scroller { padding: 4px 0 0; width: 24px; }
.scroller button { width: 24px; height: 29px; }
.feature { padding-left: 8px; padding-right: 5px; }
.sync { padding-left: 7px; padding-right: 5px; }
.list { margin: 0 4px 0 6px; }
.sync .list { margin: 0 5px 0 4px; }
.list button { gap: 5px; height: 29px; }
.list .caret { margin-left: 3px; }
.morebtn { margin-left: 6px; padding: 4px 0 0; }
.morebox { width: 38px; height: 34px; display: flex; align-items: center; justify-content: center; border: 1px solid #d4d4d4; border-radius: 3px; }
.morebtn > span + span { margin-top: 2px; }
.rows { display: block; padding: 6px 0 0 4px; }
.row { display: flex; height: 32px; }
.row button { width: 23px; height: 32px; }
.msep { width: 1px; height: 20px; margin: 7px 3px 0 2px; background: #d4d4d4; }
.glabel { display: flex; width: 0; min-width: 100%; align-items: center; height: 22px; color: #00647f; }
.glabel span { flex: 1; min-width: 0; text-align: center; }
.glabel button { width: 22px; height: 22px; }
.small .glabel { padding-right: 4px; }
.small .glabel button { width: 18px; }

.selbar { flex: none; height: 39px; display: flex; align-items: center; border-bottom: 2px solid #7f8c8f; padding-left: 10px; }
.menubtn { gap: 4px; }
.menubtn .caret { margin-left: 1px; }
.ssep { flex: none; width: 1px; height: 30px; margin: 0 12px 0 7px; background: #d4d4d4; }
.ssep.wide { margin: 0 8px 0 7px; }
.scaret + .ssep.wide { margin-left: 0; }
.combo { position: relative; display: flex; flex: none; height: 28px; margin-right: 9px; }
.combo.first { width: 202px; }
.combo.second { width: 213px; margin-right: 1px; }
.combo select { appearance: none; width: 100%; height: 28px; border: 1px solid #a6a6a6; border-radius: 0; background: #fff; color: #111; font: inherit; padding: 0 24px 0 2px; }
.combo .caret { position: absolute; right: 8px; top: 11px; }
.sbtn { width: 25px; height: 24px; }
.sbtn.on { width: 23px; height: 23px; margin: 0 1px; background: #cce4ea; border: 1px solid #a9d0da; }
.scaret { width: 16px; height: 24px; }

.work { flex: 1; min-height: 0; display: flex; }
.rail { flex: none; width: 32px; background: #dbdbdb; border-right: 1px solid #a0a0a0; }
.rail button { width: 31px; height: 42px; padding-left: 3px; }
.rail .gear { height: 40px; padding: 6px 3px 0 0; align-items: flex-start; }
.rail .gear svg { width: 15px; height: 15px; }
.rail .active { height: 46px; width: 30px; margin-left: 2px; background: #fff; border: 1px solid #a0a0a0; border-right: 0; position: relative; }
.rail .second { height: 40px; }
.rail .spaced { margin-top: 12px; }

.panel { flex: none; width: 432px; padding: 0 9px 0 6px; display: flex; flex-direction: column; min-height: 0; font-size: 18px; }
.phead { flex: none; height: 34px; display: flex; align-items: center; justify-content: space-between; padding: 3px 8px 0 3px; }
.tablebox { flex: 1; min-height: 0; overflow: hidden; border: 1px solid #d4d4d4; border-bottom: 0; }
table { table-layout: fixed; width: 100%; border-collapse: separate; border-spacing: 0; }
.c1 { width: 231px; } .c2 { width: 36px; } .c3 { width: 24px; } .c4 { width: 50px; }
th { height: 29px; padding: 1px 0 0 6px; text-align: left; font-weight: 400; background: #f0f0f0; border-right: 1px solid #d0d0d0; border-bottom: 1px solid #d0d0d0; overflow: hidden; }
th span { display: block; overflow: hidden; margin-right: 4px; }
th:last-child span { margin-right: 0; }
td { height: 28px; padding: 0; border-right: 1px solid #e6e6e6; border-bottom: 1px solid #e6e6e6; }
td:first-child { border-right: 1px solid #111; }
th:last-child, td:last-child { border-right: 0; }
tbody tr:nth-child(even) td { background: #fafafa; }
.node { display: flex; align-items: center; height: 27px; padding-left: 5px; }
.expand { width: 12px; height: 12px; border: 1px solid #c8c8c8; margin-right: 5px; }
.expand svg { width: 12px; height: 12px; }
.node input { appearance: none; flex: none; width: 13px; height: 13px; margin: 0 2px 0 0; border: 1px solid #000; background: #fff; position: relative; }
.node input:checked::after { content: ""; position: absolute; left: 3px; top: 0; width: 5px; height: 9px; border: solid #e01818; border-width: 0 3px 3px 0; transform: rotate(40deg); }
.node span, .node strong { margin-left: 3px; }
.branch { align-self: flex-start; width: 9px; height: 15px; margin: 0 2px 0 6px; border-left: 1px dotted #888; border-bottom: 1px dotted #888; }
.mod { margin-left: 5px; }

.view { flex: 1; min-width: 0; display: flex; flex-direction: column; }
.doctabs { flex: none; height: 30px; border-bottom: 2px solid #539fb8; display: flex; }
.doctab { display: flex; align-items: center; background: #539fb8; color: #fff; padding: 0 5px 0 7px; font-size: 18px; }
.doctab span { margin: 0 5px 0 4px; }
.doctab button svg { width: 12px; height: 12px; }
.canvas { position: relative; flex: 1; min-height: 0; border-left: 2px solid #d79a62; border-top: 1px solid #f09a3c; background: linear-gradient(#b2b3b5, #e2e3e5); }
.triad { position: absolute; left: 132px; top: 307px; width: 100px; height: 100px; }
.dialog { position: absolute; left: 306px; top: 132px; width: 723px; background: #fff; border: 1px solid #1a80d0; color: #000; font-size: 18px; }
.dhead { display: flex; align-items: center; justify-content: space-between; height: 42px; padding: 0 16px 0 11px; }
.dbody { display: flex; height: 230px; padding: 43px 0 0 37px; }
.erricon { width: 47px; height: 47px; }
.dbody p { margin-left: 14px; }
.dfoot { height: 78px; background: #f0f0f0; display: flex; justify-content: flex-end; align-items: flex-start; gap: 14px; padding: 14px 33px 0 0; }
.dfoot button { width: 138px; height: 43px; background: #f0f0f0; border: 1px solid #fff; border-right: 2px solid #6b6b6b; border-bottom: 2px solid #6b6b6b; }
.dfoot .default { border: 1px solid #606060; border-right-width: 2px; border-bottom-width: 3px; box-shadow: inset 1px 1px #fff, inset -1px -1px #a0a0a0; }
</style>
